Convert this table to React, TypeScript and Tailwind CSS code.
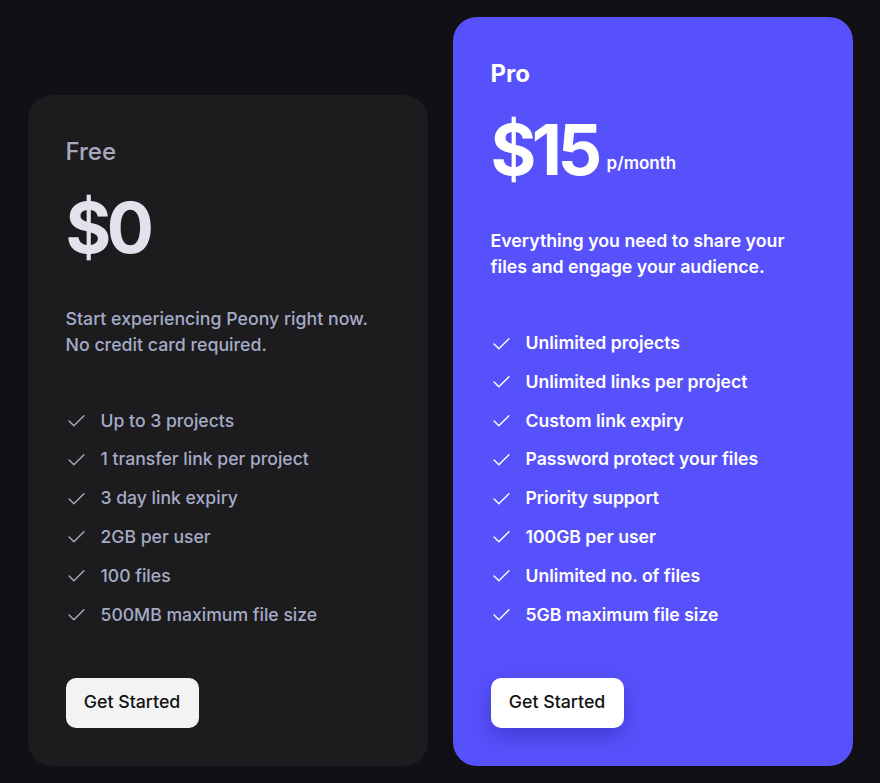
import React from 'react';

interface Plan {
  name: string;
  price: string;
  period?: string;
  description: string[];
  features: string[];
  highlight?: boolean;
}

const plans: Plan[] = [
  {
    name: 'Free',
    price: '$0',
    description: ['Start experiencing Peony right now.', 'No credit card required.'],
    features: [
      'Up to 3 projects',
      '1 transfer link per project',
      '3 day link expiry',
      '2GB per user',
      '100 files',
      '500MB maximum file size',
    ],
  },
  {
    name: 'Pro',
    price: '$15',
    period: 'p/month',
    description: ['Everything you need to share your', 'files and engage your audience.'],
    features: [
      'Unlimited projects',
      'Unlimited links per project',
      'Custom link expiry',
      'Password protect your files',
      'Priority support',
      '100GB per user',
      'Unlimited no. of files',
      '5GB maximum file size',
    ],
    highlight: true,
  },
];

function Check({ className }: { className: string }) {
  return (
    <svg viewBox="0 0 24 24" fill="none" stroke="currentColor" strokeWidth={1.6} strokeLinecap="round" strokeLinejoin="round" className={className}>
      <path d="M3.5 12.5l5.5 5.5L20.5 6.5" />
    </svg>
  );
}

function PlanCard({ plan }: { plan: Plan }) {
  const hi = plan.highlight;
  return (
    <div
      className={`w-[400px] rounded-[24px] pt-10 px-[38px] pb-[38px] flex flex-col ${hi ? 'bg-[#5751fb]' : 'bg-[#1c1c1f]'}`}
    >
      {/* Plan name */}
      <h3 className={`text-[24px] leading-8 mt-px ${hi ? 'font-bold text-white' : 'font-medium text-[#a9a9bd]'}`}>{plan.name}</h3>

      {/* Price */}
      <div className="mt-[25px] flex items-end h-[70px]">
        <span className={`text-[70px] leading-none font-bold tracking-[-0.065em] ${hi ? 'text-white' : 'text-[#e2e2ec]'}`}>
          {plan.price}
        </span>
        {plan.period && (
          <span className="ml-[9px] mb-[12px] text-[17px] leading-5 font-semibold text-white">{plan.period}</span>
        )}
      </div>

      {/* Description */}
      <p className={`mt-[43px] text-[17.75px] leading-[26px] ${hi ? 'font-semibold text-white' : 'font-medium text-[#a5abc6]'}`}>
        {plan.description.map((line) => (
          <span key={line} className="block">
            {line}
          </span>
        ))}
      </p>

      {/* Features */}
      <ul className="mt-[49px] flex flex-col gap-[10.8px]">
        {plan.features.map((f) => (
          <li key={f} className="flex items-center h-7">
            <Check className={`w-[21px] h-[21px] shrink-0 ${hi ? 'text-white' : 'text-[#a9a9bd]'}`} />
            <span className={`ml-[14px] text-[17.6px] leading-7 ${hi ? 'font-semibold text-white' : 'font-medium text-[#a5abc6]'}`}>
              {f}
            </span>
          </li>
        ))}
      </ul>

      {/* CTA */}
      <div className="mt-[49px]">
        <button
          className={`h-[50px] w-[133px] rounded-[10px] text-[17.75px] font-medium text-[#111] ${hi ? 'bg-white shadow-[0_8px_20px_rgba(40,30,160,0.45)]' : 'bg-[#f3f3f3]'}`}
        >
          Get Started
        </button>
      </div>
    </div>
  );
}

export default function App() {
  return (
    <div
      className="w-full min-h-[783px] bg-[#111115] flex justify-center items-end pt-[17px] pb-[18px]"
      style={{ fontFamily: 'Inter, "Noto Sans", sans-serif' }}
    >
      <div className="flex items-end gap-[25px]">
        {plans.map((p) => (
          <PlanCard key={p.name} plan={p} />
        ))}
      </div>
    </div>
  );
}
